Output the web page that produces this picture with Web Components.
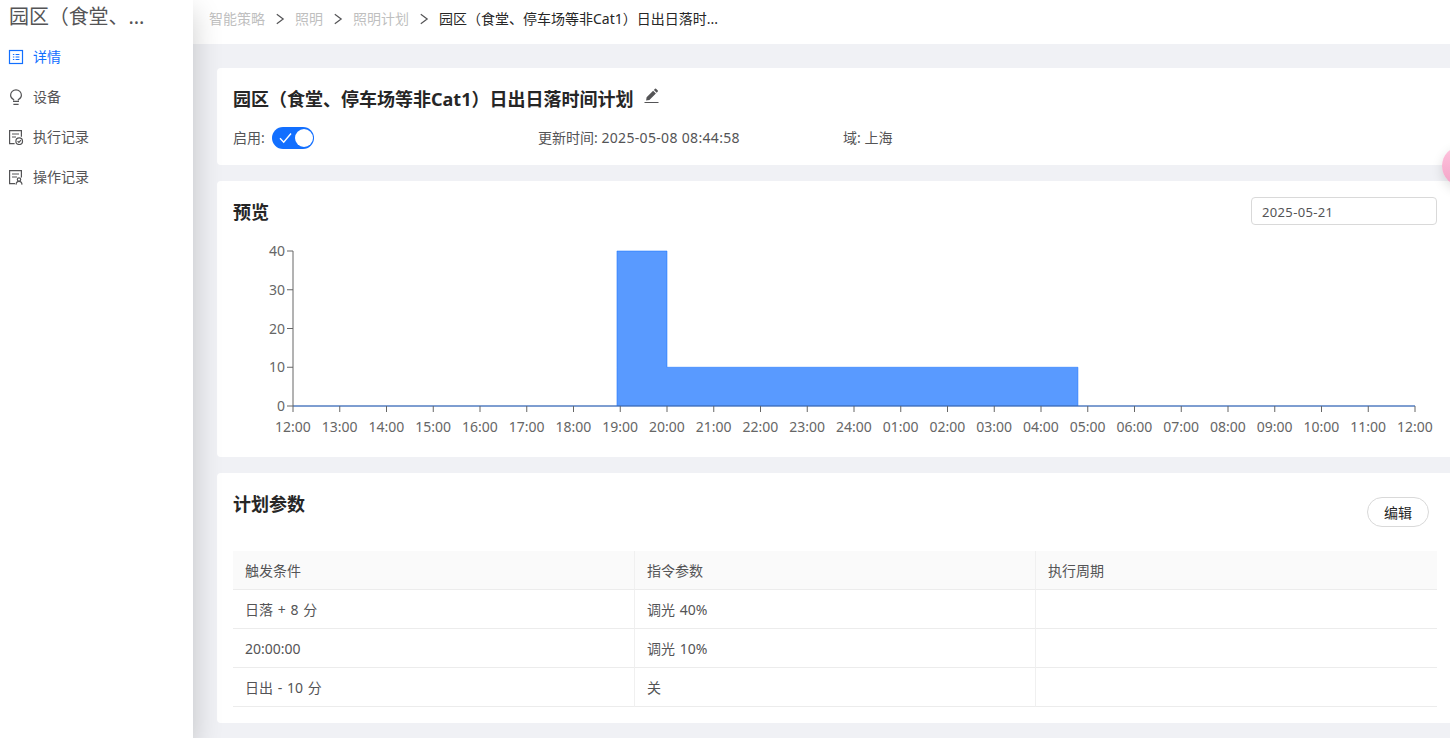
<!DOCTYPE html>
<html lang="zh-CN">
<head>
<meta charset="UTF-8">
<title>照明计划</title>
<style>
    html, body {
        margin: 0;
        height: 100%;
        overflow: hidden;
    }
    body {
        font-family: 'Noto Sans', 'Noto Sans CJK SC', sans-serif;
        font-size: 14px;
        line-height: 22px;
        color: #545456;
        background: #f0f1f5;
    }
</style>
</head>
<body>
<plan-app></plan-app>
<script>
const icons = {
    detail: `
        <rect x="1.5" y="1.5" width="13" height="13"/>
        <path d="M4.900 5.500h1.400M4.900 8h1.400M4.900 10.500h1.400M7.600 5.500h3.800M7.600 8h3.800M7.600 10.500h3.800"/>`,
    bulb: `
        <path d="M5.600 11.600V10.500C3.700 9.600 2.600 8.100 2.600 6.200a5.400 5.400 0 0 1 10.800 0c0 1.900-1.100 3.400-3 4.300v1.100"/>
        <path d="M5 12.400h6M5.400 15.300h5.200"/>`,
    exec: `
        <path d="M6.600 14.600H1.600V1.600h11.800v6.200M4 5h7M4 8h4"/>
        <circle cx="11.200" cy="12.200" r="3.300"/>
        <path d="M9.600 12.100l1.300 1.300 2-2.300"/>`,
    oper: `
        <path d="M7 14.600H1.600V1.600h11.800v7M4 5h7M4 8h5"/>
        <circle cx="11" cy="10.600" r="1.700"/>
        <path d="M8 15.600c.1-2.200 1.300-3.300 3-3.300s2.900 1.100 3 3.300"/>`
};

class SideItem extends HTMLElement {
    connectedCallback() {
        this.attachShadow({ mode: 'open' });
        this.shadowRoot.innerHTML = `
            <style>
                :host {
                    display: flex;
                    align-items: center;
                    gap: 9px;
                    height: 40px;
                    padding-left: 8px;
                }
                :host([active]) {
                    color: #126fff;
                }
                svg {
                    width: 16px;
                    height: 16px;
                    fill: none;
                    stroke: currentColor;
                    stroke-width: 1.2;
                }
            </style>
            <svg viewBox="0 0 16 16">${icons[this.getAttribute('icon')]}</svg>
            <span><slot></slot></span>
        `;
    }
}

class SideMenu extends HTMLElement {
    connectedCallback() {
        this.attachShadow({ mode: 'open' });
        this.shadowRoot.innerHTML = `
            <style>
                :host {
                    display: block;
                    flex: 0 0 193px;
                    background: #fff;
                    box-shadow: 0 12px 28px rgba(0, 0, 0, 0.2);
                    position: relative;
                    z-index: 2;
                }
                .title {
                    height: 37px;
                    padding-left: 9px;
                    font-size: 20px;
                    line-height: 33px;
                    letter-spacing: -0.1px;
                    box-sizing: border-box;
                    white-space: nowrap;
                }
            </style>
            <div class="title">园区（食堂、...</div>
            <side-item icon="detail" active>详情</side-item>
            <side-item icon="bulb">设备</side-item>
            <side-item icon="exec">执行记录</side-item>
            <side-item icon="oper">操作记录</side-item>
        `;
    }
}

class CrumbBar extends HTMLElement {
    connectedCallback() {
        const arrow = '<svg viewBox="0 0 30 14"><path d="M11.800 2.200l6.400 4.800-6.400 4.800"/></svg>';
        this.attachShadow({ mode: 'open' });
        this.shadowRoot.innerHTML = `
            <style>
                :host {
                    display: flex;
                    align-items: center;
                    height: 44px;
                    padding: 0 16px 6px;
                    box-sizing: border-box;
                    background: #fff;
                    color: #bfbfbf;
                    white-space: nowrap;
                }
                svg {
                    width: 30px;
                    height: 14px;
                    fill: none;
                    stroke: #545456;
                    stroke-width: 1.2;
                }
                .current {
                    color: #262626;
                }
            </style>
            <span>智能策略</span>${arrow}<span>照明</span>${arrow}<span>照明计划</span>${arrow}
            <span class="current">园区（食堂、停车场等非Cat1）日出日落时...</span>
        `;
    }
}

class PlanCard extends HTMLElement {
    connectedCallback() {
        this.attachShadow({ mode: 'open' });
        this.shadowRoot.innerHTML = `
            <style>
                :host {
                    display: block;
                    background: #fff;
                    border-radius: 4px;
                    padding: 16px;
                    box-sizing: border-box;
                }
                header {
                    display: flex;
                    justify-content: space-between;
                    align-items: flex-start;
                    height: 30px;
                }
                h2 {
                    display: flex;
                    align-items: center;
                    gap: 11px;
                    margin: 0;
                    font-size: 18px;
                    line-height: 30px;
                    font-weight: 700;
                    color: #262626;
                    white-space: nowrap;
                }
            </style>
            <header>
                <h2>${this.getAttribute('heading')}<slot name="after"></slot></h2>
                <slot name="extra"></slot>
            </header>
            <slot></slot>
        `;
    }
}

class ToggleSwitch extends HTMLElement {
    connectedCallback() {
        this.attachShadow({ mode: 'open' });
        this.shadowRoot.innerHTML = `
            <style>
                :host {
                    display: flex;
                    align-items: center;
                    justify-content: space-between;
                    width: 42px;
                    height: 22px;
                    padding: 0 1px 0 7px;
                    box-sizing: border-box;
                    border-radius: 11px;
                    background: #126fff;
                }
                svg {
                    width: 13px;
                    height: 12px;
                    fill: none;
                    stroke: #fff;
                    stroke-width: 1.4;
                }
                .knob {
                    width: 18px;
                    height: 18px;
                    border-radius: 50%;
                    background: #fff;
                }
            </style>
            <svg viewBox="0 0 13 12"><path d="M1 6.200l3.700 4L12 1.500"/></svg>
            <div class="knob"></div>
        `;
    }
}

class DateField extends HTMLElement {
    connectedCallback() {
        this.attachShadow({ mode: 'open' });
        this.shadowRoot.innerHTML = `
            <style>
                :host {
                    display: block;
                    width: 186px;
                    height: 28px;
                    padding-left: 10px;
                    box-sizing: border-box;
                    border: 1px solid #d9d9d9;
                    border-radius: 4px;
                    font-size: 13px;
                    line-height: 28px;
                    letter-spacing: 0.35px;
                }
            </style>
            <slot></slot>
        `;
    }
}

class PlanChart extends HTMLElement {
    connectedCallback() {
        const left = 60, right = 1182, top = 26, bottom = 181;
        const x = h => left + (h - 12) * (right - left) / 24;
        const y = v => bottom - v * (bottom - top) / 40;
        let axis = '';
        let labels = '';
        for (let h = 12; h <= 36; h++) {
            const name = String(h > 24 ? h - 24 : h).padStart(2, '0') + ':00';
            axis += `<line x1="${x(h)}" y1="${bottom}" x2="${x(h)}" y2="${bottom + 6}"/>`;
            labels += `<text x="${x(h)}" y="${bottom + 26}" text-anchor="middle">${name}</text>`;
        }
        for (let v = 0; v <= 40; v += 10) {
            axis += `<line x1="${left - 6}" y1="${y(v)}" x2="${left}" y2="${y(v)}"/>`;
            labels += `<text x="${left - 8}" y="${y(v) + 5}" text-anchor="end">${v}</text>`;
        }
        // sunset + 8 min, dimmed at 20:00, off 10 min before sunrise
        const on = 18.93, dim = 20, off = 28.79;
        const step = `M${x(on)} ${bottom}V${y(40)}H${x(dim)}V${y(10)}H${x(off)}V${bottom}`;
        this.attachShadow({ mode: 'open' });
        this.shadowRoot.innerHTML = `
            <style>
                :host {
                    display: block;
                    margin-top: -2px;
                }
                svg {
                    display: block;
                    width: 1220px;
                    height: 216px;
                }
                text {
                    fill: #666;
                    font-size: 14px;
                }
                .axis {
                    stroke: #666;
                }
            </style>
            <svg viewBox="0 0 1220 216">
                <path d="${step}Z" fill="#126fff" fill-opacity="0.7"/>
                <path d="${step}" fill="none" stroke="#126fff" stroke-opacity="0.5"/>
                <path d="M${left} ${bottom}H${right}" stroke="#126fff"/>
                <g class="axis">
                    <line x1="${left}" y1="${top}" x2="${left}" y2="${bottom}"/>
                    <line x1="${left}" y1="${bottom}" x2="${right}" y2="${bottom}" stroke-opacity="0.6"/>
                    ${axis}
                </g>
                ${labels}
            </svg>
        `;
    }
}

class ParamTable extends HTMLElement {
    connectedCallback() {
        const rows = [
            ['日落 + 8 分', '调光 40%', ''],
            ['20:00:00', '调光 10%', ''],
            ['日出 - 10 分', '关', '']
        ];
        const cells = row => row.map(c => `<div>${c}</div>`).join('');
        this.attachShadow({ mode: 'open' });
        this.shadowRoot.innerHTML = `
            <style>
                :host {
                    display: block;
                    width: 1204px;
                    margin-top: 32px;
                    word-spacing: 1.1px;
                }
                .row {
                    display: grid;
                    grid-template-columns: 402px 401px 1fr;
                    height: 39px;
                }
                .row div {
                    padding-left: 12px;
                    line-height: 39px;
                    height: 39px;
                    box-sizing: border-box;
                    border-right: 1px solid #f0f0f0;
                    border-bottom: 1px solid #ececec;
                }
                .row div:last-child {
                    border-right: none;
                }
                .head {
                    background: #fafafa;
                }
            </style>
            <div class="row head">${cells(['触发条件', '指令参数', '执行周期'])}</div>
            ${rows.map(r => `<div class="row">${cells(r)}</div>`).join('')}
        `;
    }
}

class PlanApp extends HTMLElement {
    connectedCallback() {
        this.attachShadow({ mode: 'open' });
        this.shadowRoot.innerHTML = `
            <style>
                :host {
                    display: flex;
                    height: 100vh;
                    overflow: hidden;
                    position: relative;
                }
                main {
                    flex: 0 0 1260px;
                    min-width: 0;
                }
                .cards {
                    display: flex;
                    flex-direction: column;
                    gap: 16px;
                    padding: 24px 0 0 24px;
                }
                .info { height: 97px; }
                .preview { height: 276px; }
                .params { height: 250px; }
                .pen {
                    width: 16px;
                    height: 16px;
                    margin-top: -6px;
                    color: #545456;
                }
                .facts {
                    display: grid;
                    grid-template-columns: repeat(4, 305px);
                    align-items: center;
                    height: 22px;
                    margin-top: 13px;
                }
                .enabled {
                    display: flex;
                    align-items: center;
                    gap: 7px;
                }
                .stamp { letter-spacing: 0.33px; }
                button {
                    flex: none;
                    width: 62px;
                    height: 30px;
                    margin: 8px 8px 0 0;
                    padding: 1px 0 0;
                    border: 1px solid #d9d9d9;
                    border-radius: 15px;
                    background: #fff;
                    font: inherit;
                    color: #262626;
                }
                .bubble {
                    position: absolute;
                    left: 1441.5px;
                    top: 146px;
                    width: 40px;
                    height: 40px;
                    border-radius: 50%;
                    background: linear-gradient(#ffc4de, #f3a3c6);
                    box-shadow: 0 4px 12px rgba(0, 0, 0, 0.13);
                }
            </style>
            <side-menu></side-menu>
            <main>
                <crumb-bar></crumb-bar>
                <div class="cards">
                    <plan-card class="info" heading="园区（食堂、停车场等非Cat1）日出日落时间计划">
                        <svg slot="after" class="pen" viewBox="0 0 16 16" fill="currentColor">
                            <path d="M2.600 9.200L9.100 2.700l2.800 2.800-6.500 6.500-3.300.6zM9.900 1.900L11 .800q.5-.4 1 0l1.800 1.800q.4.500 0 1l-1.100 1.100zM.500 14h14v1.100H.500z"/>
                        </svg>
                        <div class="facts">
                            <div class="enabled">启用: <toggle-switch></toggle-switch></div>
                            <div>更新时间: <span class="stamp">2025-05-08 08:44:58</span></div>
                            <div>域: 上海</div>
                        </div>
                    </plan-card>
                    <plan-card class="preview" heading="预览">
                        <date-field slot="extra">2025-05-21</date-field>
                        <plan-chart></plan-chart>
                    </plan-card>
                    <plan-card class="params" heading="计划参数">
                        <button slot="extra">编辑</button>
                        <param-table></param-table>
                    </plan-card>
                </div>
            </main>
            <div class="bubble"></div>
        `;
    }
}

customElements.define('side-item', SideItem);
customElements.define('side-menu', SideMenu);
customElements.define('crumb-bar', CrumbBar);
customElements.define('plan-card', PlanCard);
customElements.define('toggle-switch', ToggleSwitch);
customElements.define('date-field', DateField);
customElements.define('plan-chart', PlanChart);
customElements.define('param-table', ParamTable);
customElements.define('plan-app', PlanApp);
</script>
</body>
</html>
